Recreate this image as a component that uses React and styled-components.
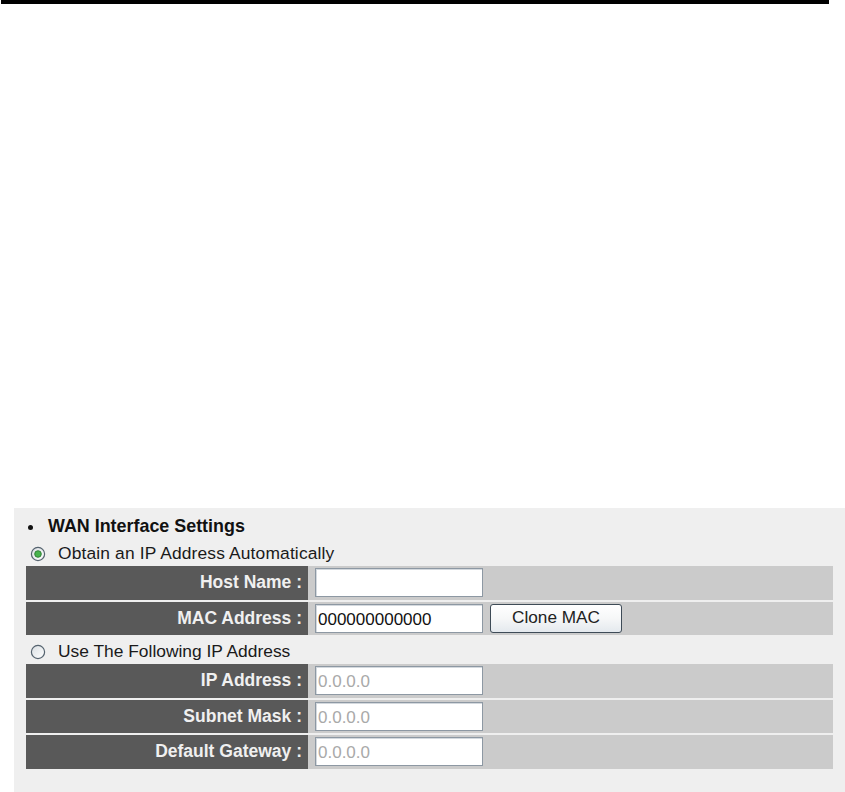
import React from "react";
import styled, { createGlobalStyle } from "styled-components";

const Global = createGlobalStyle`
  html, body { margin: 0; padding: 0; background: #ffffff; }
  body { font-family: "Liberation Sans", Arial, sans-serif; }
`;

const Page = styled.div`
  width: 845px;
  height: 792px;
  overflow: hidden;
  display: flex;
  flex-direction: column;
`;

const TopRule = styled.div`
  margin-left: 1px;
  width: 828px;
  height: 4px;
  background: #000;
`;

const Panel = styled.section`
  margin-top: 504px;
  margin-left: 14px;
  flex: 1;
  background: #efefef;
  padding: 4px 12px 0 12px;
  display: flex;
  flex-direction: column;
`;

const Heading = styled.div`
  height: 29px;
  display: flex;
  align-items: center;
  padding-left: 2px;
  font-size: 17.9px;
  font-weight: bold;
  color: #111;
`;

const Bullet = styled.span`
  width: 5px;
  height: 5px;
  border-radius: 50%;
  background: #111;
  margin-right: 15px;
  margin-top: 2px;
`;

const RadioRow = styled.div`
  height: ${(p) => p.$h}px;
  padding-top: ${(p) => p.$pt || 0}px;
  box-sizing: border-box;
  display: flex;
  align-items: center;
  gap: 12px;
  padding-left: 4px;
  font-size: 17.4px;
  letter-spacing: ${(p) => p.$ls || 0}px;
  color: #1a1a1a;
`;

const Grid = styled.div`
  display: grid;
  grid-template-columns: 282px 1fr;
  grid-auto-rows: 33.5px;
  row-gap: 2px;
`;

const Label = styled.div`
  background: #595959;
  color: #f0f0f0;
  font-weight: bold;
  font-size: 17.5px;
  display: flex;
  align-items: center;
  justify-content: flex-end;
  padding-right: 6px;
`;

const Value = styled.div`
  background: #cbcbcb;
  display: flex;
  align-items: center;
  gap: 7px;
  padding-left: 7px;
`;

const Field = styled.input`
  box-sizing: border-box;
  width: 168px;
  height: 29px;
  margin: 0;
  padding: 3px 2px 0 2px;
  border: 1px solid #8d98a3;
  box-shadow: inset 1px 1px 0 #d4d9de;
  background: #fff;
  font-family: "Liberation Sans", Arial, sans-serif;
  font-size: 17px;
  color: ${(p) => (p.$dim ? "#a9a9a9" : "#111")};
  outline: none;
`;

const Button = styled.button`
  box-sizing: border-box;
  width: 132px;
  height: 29px;
  margin: 0;
  padding: 0 0 2px 0;
  border: 1px solid #3e4b57;
  border-radius: 3px;
  background: linear-gradient(#ffffff 0%, #f6f7f8 50%, #e4e9ee 100%);
  font-family: "Liberation Sans", Arial, sans-serif;
  font-size: 17.2px;
  color: #222;
`;

const Radio = ({ checked }) => (
  <svg width="16" height="16" viewBox="0 0 16 16">
    <defs>
      <linearGradient id={checked ? "rg1" : "rg2"} x1="0" y1="0" x2="1" y2="1">
        <stop offset="0" stopColor="#d9dee2" />
        <stop offset="1" stopColor="#ffffff" />
      </linearGradient>
    </defs>
    <circle cx="8" cy="8" r="6.6" fill={`url(#${checked ? "rg1" : "rg2"})`} stroke="#55636f" strokeWidth="1.2" />
    {checked && <circle cx="8" cy="8" r="3.3" fill="#47b34d" stroke="#2c7a33" strokeWidth="0.9" />}
  </svg>
);

const Row = ({ label, children }) => (
  <>
    <Label>{label}</Label>
    <Value>{children}</Value>
  </>
);

export default function App() {
  return (
    <Page>
      <Global />
      <TopRule />
      <Panel>
        <Heading>
          <Bullet />
          WAN Interface Settings
        </Heading>
        <RadioRow $h={25} $ls={0.15}>
          <Radio checked />
          Obtain an IP Address Automatically
        </RadioRow>
        <Grid>
          <Row label="Host Name :">
            <Field readOnly defaultValue="" />
          </Row>
          <Row label="MAC Address :">
            <Field readOnly defaultValue="000000000000" />
            <Button>Clone MAC</Button>
          </Row>
        </Grid>
        <RadioRow $h={29} $pt={4}>
          <Radio />
          Use The Following IP Address
        </RadioRow>
        <Grid>
          <Row label="IP Address :">
            <Field readOnly $dim defaultValue="0.0.0.0" />
          </Row>
          <Row label="Subnet Mask :">
            <Field readOnly $dim defaultValue="0.0.0.0" />
          </Row>
          <Row label="Default Gateway :">
            <Field readOnly $dim defaultValue="0.0.0.0" />
          </Row>
        </Grid>
      </Panel>
    </Page>
  );
}
